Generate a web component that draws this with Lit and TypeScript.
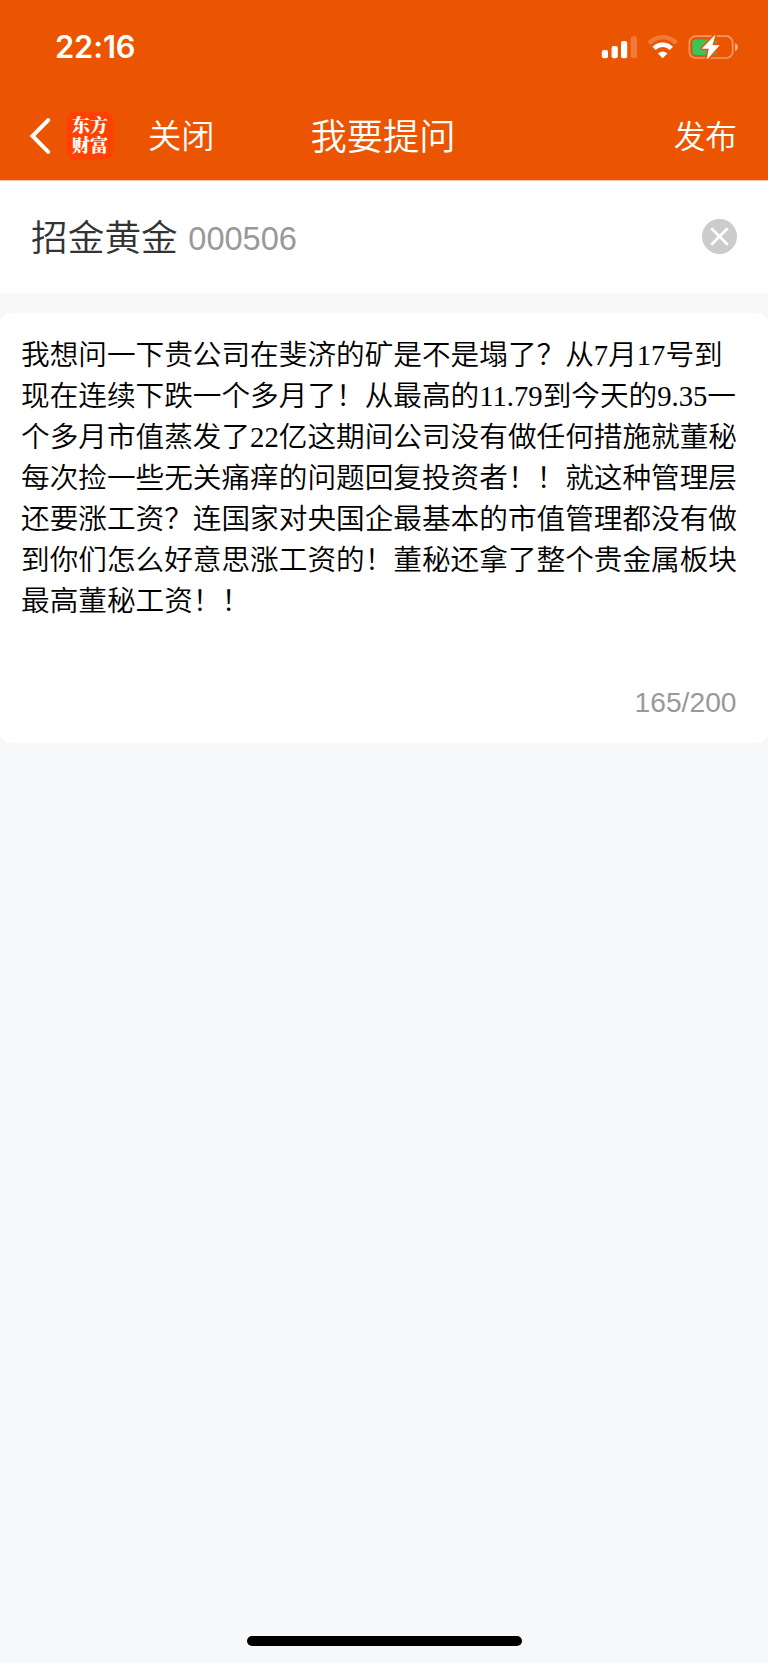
import { LitElement, html, css } from "lit";
import { customElement } from "lit/decorators.js";

const QUESTION_LINES = [
  "我想问一下贵公司在斐济的矿是不是塌了？从7月17号到",
  "现在连续下跌一个多月了！从最高的11.79到今天的9.35一",
  "个多月市值蒸发了22亿这期间公司没有做任何措施就董秘",
  "每次捡一些无关痛痒的问题回复投资者！！就这种管理层",
  "还要涨工资？连国家对央国企最基本的市值管理都没有做",
  "到你们怎么好意思涨工资的！董秘还拿了整个贵金属板块",
  "最高董秘工资！！",
];

@customElement("status-bar")
class StatusBar extends LitElement {
  static styles = css`
    :host { display: flex; height: 94px; box-sizing: border-box; padding: 0 29px 0 55px; justify-content: space-between; color: #fff; }
    .time { font: 600 30.8px/36px Inter, sans-serif; padding-top: 29px; letter-spacing: -0.1px; }
    .icons { display: block; width: 138px; height: 26px; margin-top: 34px; }
  `;
  render() {
    return html`
      <div class="time">22:16</div>
      <svg class="icons" viewBox="0 0 138 26" fill="#fff">
        <rect x="0.8" y="16" width="6.2" height="8.2" rx="2" />
        <rect x="10.6" y="12" width="6.2" height="12.2" rx="2" />
        <rect x="20" y="7" width="6.2" height="17.2" rx="2" />
        <rect x="29.8" y="2.2" width="6.2" height="22" rx="2" opacity=".22" />
        <path d="M48.2 9.3A18.2 18.2 0 0 1 75.2 9.3" fill="none" stroke="#fff" stroke-opacity=".22" stroke-width="4.6" />
        <path d="M53 14.3A12.4 12.4 0 0 1 70.4 14.3" fill="none" stroke="#fff" stroke-width="4.6" />
        <path d="M61.7 24.2L56.9 19.6Q61.7 15.6 66.5 19.6Z" />
        <rect x="88.3" y="2.2" width="43.4" height="21.8" rx="6.5" fill="none" stroke="#fff" stroke-opacity=".4" stroke-width="1.7" />
        <path d="M134 9.2Q136.9 10 136.9 13.1Q136.9 16.2 134 17.2Z" opacity=".5" />
        <rect x="91.5" y="5.5" width="24.3" height="15.4" rx="3.2" fill="#34c759" />
        <path d="M113.9 1.5L101.5 14.3H108.3L106.2 25L118 11.5H111Z" stroke="#eb5502" stroke-width="4" stroke-linejoin="round" />
        <path d="M113.9 1.5L101.5 14.3H108.3L106.2 25L118 11.5H111Z" stroke="#fff" stroke-width="0.8" stroke-linejoin="round" />
      </svg>
    `;
  }
}

@customElement("nav-bar")
class NavBar extends LitElement {
  static styles = css`
    :host { display: grid; grid-template-columns: 1fr auto 1fr; align-items: center; height: 86px; box-sizing: border-box; padding: 0 31px 7px 29px; color: #fff; font-family: "Noto Sans CJK SC", sans-serif; font-weight: 350; white-space: nowrap; }
    .left { display: flex; align-items: center; }
    .back { width: 22px; height: 38px; margin: 4px 15px 0 0; }
    .logo { display: flex; flex-direction: column; align-items: center; justify-content: center; width: 48px; height: 48px; box-sizing: border-box; padding-bottom: 3px; margin-top: 4px; border-radius: 9px; background: #ff4200; font: 900 18.2px/20.4px "Noto Serif CJK SC", "Noto Sans CJK SC", sans-serif; }
    .close { font-size: 33.3px; line-height: 48px; margin-left: 34px; }
    .title { font-size: 36.3px; line-height: 48px; }
    .publish { font-size: 31.7px; line-height: 48px; text-align: right; }
  `;
  render() {
    return html`
      <div class="left">
        <svg class="back" viewBox="0 0 22 38"><path d="M19.2 3.2L3.5 19L19.2 34.8" fill="none" stroke="#fff" stroke-width="4" stroke-linecap="round" /></svg>
        <div class="logo"><span>东方</span><span>财富</span></div>
        <div class="close">关闭</div>
      </div>
      <div class="title">我要提问</div>
      <div class="publish">发布</div>
    `;
  }
}

@customElement("app-root")
class AppRoot extends LitElement {
  static styles = css`
    :host { display: flex; flex-direction: column; height: 1663px; background: #f6f8fa; font-family: "Liberation Sans", "Noto Sans CJK SC", sans-serif; }
    .header { background: #eb5502; border-bottom: 1px solid #ffc6a9; }
    .stock { display: flex; align-items: center; height: 112px; box-sizing: border-box; padding: 0 31px 0 31px; background: #fff; }
    .name { font-family: "Noto Sans CJK SC", sans-serif; font-weight: 350; font-size: 36.7px; line-height: 50px; color: #333; padding-bottom: 4px; }
    .code { font-size: 32.6px; line-height: 50px; color: #999; margin-left: 10.5px; padding-top: 3px; flex: 1; }
    .clear { width: 35px; height: 35px; margin-bottom: 1px; }
    .card { display: flex; flex-direction: column; height: 430px; box-sizing: border-box; margin-top: 20px; padding: 22px 0 20px 21px; background: #fff; border-radius: 10px; }
    .line { height: 41.06px; font: 350 28.65px/41.06px "Liberation Serif", "Noto Sans CJK SC", serif; color: #000; white-space: nowrap; }
    .count { margin-top: auto; padding-right: 31.5px; text-align: right; font-size: 28.2px; line-height: 42px; color: #999; }
    .home { width: 275px; height: 10px; border-radius: 5px; background: #000; margin: auto auto 17px 247px; }
  `;
  render() {
    return html`
      <div class="header"><status-bar></status-bar><nav-bar></nav-bar></div>
      <div class="stock">
        <div class="name">招金黄金</div>
        <div class="code">000506</div>
        <svg class="clear" viewBox="0 0 35 35"><circle cx="17.5" cy="17.5" r="17.5" fill="#ccc" /><path d="M9.3 9.3L25.7 25.7M25.7 9.3L9.3 25.7" stroke="#fff" stroke-width="2.7" /></svg>
      </div>
      <div class="card">
        ${QUESTION_LINES.map((line) => html`<div class="line">${line}</div>`)}
        <div class="count">165/200</div>
      </div>
      <div class="home"></div>
    `;
  }
}
